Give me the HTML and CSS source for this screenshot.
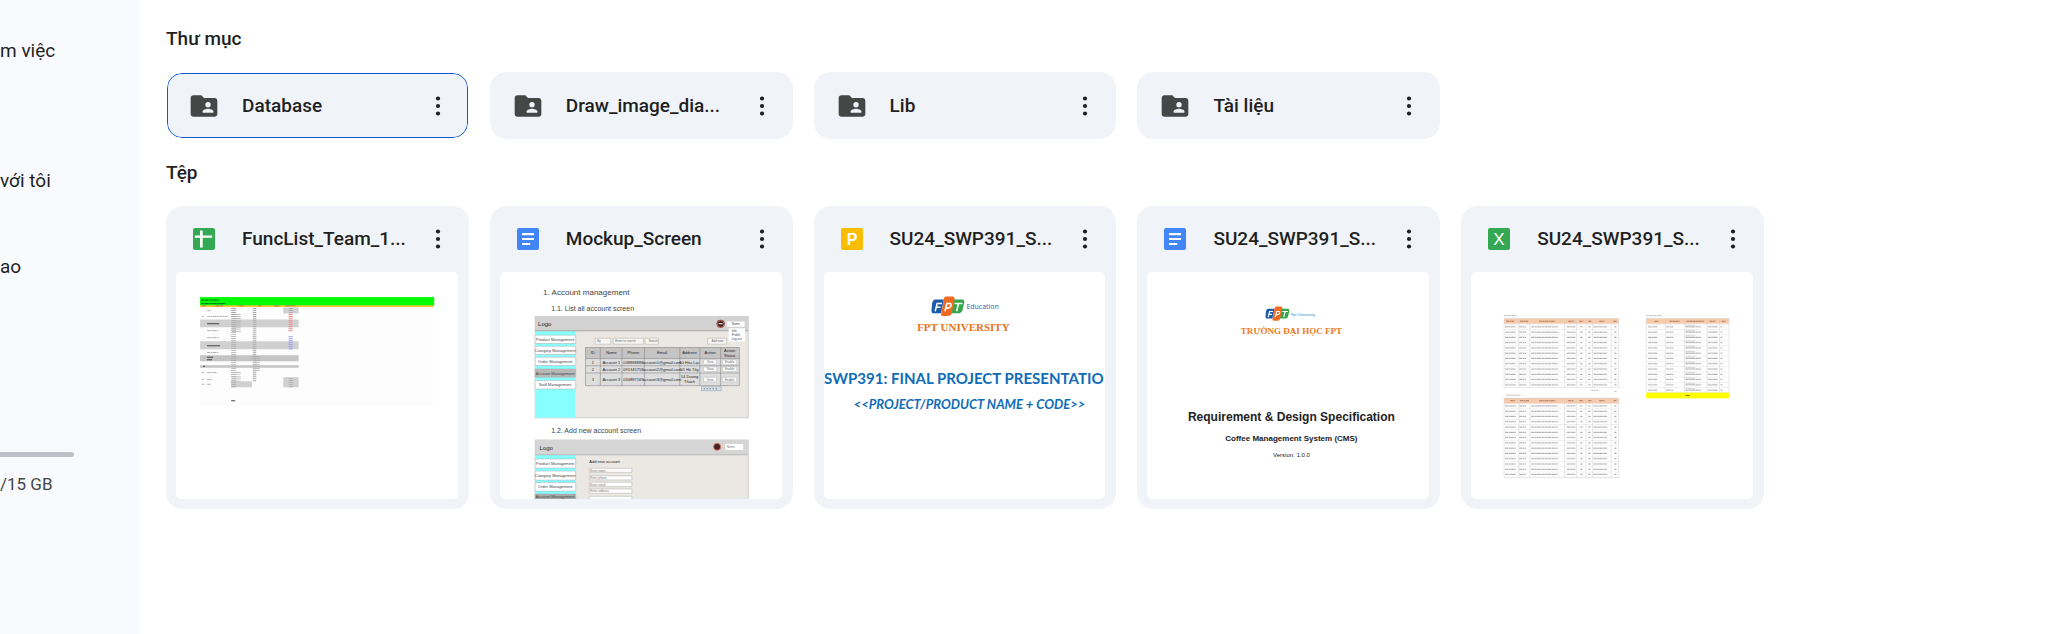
FILE: index.html
```html
<!DOCTYPE html>
<html lang="vi">
<head>
<meta charset="utf-8">
<title>Drive</title>
<link rel="stylesheet" href="styles.css">
</head>
<body>
<svg class="defs" aria-hidden="true">
  <defs>
    <symbol id="folder" viewBox="0 0 24 24">
      <path fill="#444746" d="M20 6h-8l-2-2H4c-1.100 0-2 .9-2 2v12c0 1.100.9 2 2 2h16c1.100 0 2-.9 2-2V8c0-1.100-.9-2-2-2z"/>
      <circle cx="15" cy="11" r="2" fill="#f0f4f9"/>
      <path fill="#f0f4f9" d="M11 17v-1c0-1.330 2.670-2 4-2s4 .67 4 2v1z"/>
    </symbol>
    <symbol id="more" viewBox="0 0 28 32">
      <g fill="#1f1f1f"><circle cx="14" cy="8.500" r="2.100"/><circle cx="14" cy="16" r="2.100"/><circle cx="14" cy="23.500" r="2.100"/></g>
    </symbol>
    <symbol id="sheets" viewBox="0 0 22 22">
      <rect width="22" height="22" rx="2" fill="#34a853"/>
      <path fill="#fff" d="M7 2.400h2.700v5h9.500v2.400H9.700v9.800H7V9.800H1.800V7.400H7z"/>
    </symbol>
    <symbol id="docs" viewBox="0 0 22 22">
      <rect width="22" height="22" rx="2" fill="#4285f4"/>
      <path fill="#fff" d="M5 5h12v2.200H5zM5 10h12v2H5zM5 15h8.300v2H5z"/>
    </symbol>
    <symbol id="fpt" viewBox="0 0 34 22">
      <path fill="#1c5cab" d="M4 4h9l-3 14H2q-2 0-2-3l1-8q1-3 3-3z"/>
      <path fill="#36a749" d="M23 4h9q2 0 2 3l-2 8q-1 3-3 3h-9z"/>
      <path fill="#ef6b22" d="M15 1h7q2 0 2 2l-3 15q-1 3-3 3h-6q-2 0-2-2l3-15q0-3 2-3z"/>
      <g fill="none" stroke="#fff" stroke-width="1.600"><path d="M4 16l2-8h5M5 12h4.500M14 16l2-8h3q2 0 1 3-1 2-5 2M24 8h8M28 8l-2 8"/></g>
    </symbol>
  </defs>
</svg>
<div class="app">
  <nav class="sidebar" aria-label="Drive">
    <a class="nav-item" href="#work">m việc</a>
    <a class="nav-item shared" href="#shared">với tôi</a>
    <a class="nav-item starred" href="#starred">ao</a>
    <div class="storage">
      <div class="meter"></div>
      <span>/15 GB</span>
    </div>
  </nav>
  <main class="content">
    <h2 class="section-title">Thư mục</h2>
    <ul class="grid">
      <li class="card selected"><div class="card-head"><svg class="icon"><use href="#folder"/></svg><a class="name" href="#database">Database</a><button class="more" aria-label="Thao tác khác"><svg><use href="#more"/></svg></button></div></li>
      <li class="card"><div class="card-head"><svg class="icon"><use href="#folder"/></svg><a class="name" href="#draw">Draw_image_dia...</a><button class="more" aria-label="Thao tác khác"><svg><use href="#more"/></svg></button></div></li>
      <li class="card"><div class="card-head"><svg class="icon"><use href="#folder"/></svg><a class="name" href="#lib">Lib</a><button class="more" aria-label="Thao tác khác"><svg><use href="#more"/></svg></button></div></li>
      <li class="card"><div class="card-head"><svg class="icon"><use href="#folder"/></svg><a class="name" href="#docs-folder">Tài liệu</a><button class="more" aria-label="Thao tác khác"><svg><use href="#more"/></svg></button></div></li>
    </ul>
    <h2 class="section-title">Tệp</h2>
    <ul class="grid">
      <li class="card">
        <div class="card-head file-head"><svg class="icon file"><use href="#sheets"/></svg><a class="name" href="#f1">FuncList_Team_1...</a><button class="more" aria-label="Thao tác khác"><svg><use href="#more"/></svg></button></div>
        <svg class="thumb" viewBox="0 0 281 226">
          <rect x="24" y="34" width="233" height="100" fill="#fdfdfd"/>
          <rect x="24" y="33" width="233" height="2" fill="#ffc23d"/>
          <rect x="24" y="25" width="233.500" height="8.300" fill="#0f0"/>
          <path stroke="#073" stroke-width="1.200" stroke-dasharray="3 .5 4 .7" d="M25 28h18M25 31.600h25"/>
          <path stroke="#a66" stroke-width=".8" d="M26 33.800h3M39 33.800h8M63 33.800h4M82 33.800h3M98 33.800h5M109 33.800h10"/>
          <g fill="#d0d0d0"><path d="M24 47.300h98.300V55H24zM24 69h98.300v8H24zM107 35.300h15.300v6H107zM107 105h15.300v10H107zM55 109h20.700v6H55z"/></g>
          <path fill="#c4c4c4" d="M24 83h98.300v6H24zM24 93h98.300v2.500H24z"/>
          <g stroke="#aaa" fill="none">
            <path stroke-width="5" stroke-dasharray=".8 1.200" d="M57.500 36V116"/>
            <path stroke-width="9" stroke-dasharray=".7 1.400" d="M60 42V60M60 100V109"/>
            <path stroke-width="3.500" stroke-dasharray="1 1" d="M78.300 36V109"/>
            <path stroke-width="4" stroke-dasharray=".8 1.200" d="M81.500 84V99M114.500 106V115M114.500 36V41"/>
            <path stroke-width=".9" stroke-dasharray="3 .5 2 .4" d="M31 38.500h4M26 44.300h2M31 44.300h21M31 58.500h11M31 65.500h12M31 80.300h11M26 100.300h2M31 100.300h10M26 107h2M31 107.300h5M31 112h4M26 112h2"/>
            <path stroke="#444" stroke-width="1" d="M31 51.500h12M31 73.500h13M31 85h6M31 87.500h5M55 128.300h4M27 94h2"/>
          </g>
          <path stroke="#e88" stroke-width="4" stroke-dasharray="1 1" d="M114.300 42V60"/>
          <path stroke="#99e" stroke-width="4" stroke-dasharray="1 1" d="M114.300 64V77"/>
        </svg>
      </li>
      <li class="card">
        <div class="card-head file-head"><svg class="icon file"><use href="#docs"/></svg><a class="name" href="#f2">Mockup_Screen</a><button class="more" aria-label="Thao tác khác"><svg><use href="#more"/></svg></button></div>
        <svg class="thumb arial" viewBox="0 0 281 226">
          <g fill="#444"><text x="43" y="23" font-size="8">1. Account management</text>
          <text x="51" y="39" font-size="7">1.1. List all account screen</text>
          <text x="51" y="161" font-size="7">1.2. Add new account screen</text></g>
          <rect x="35" y="44.500" width="212.500" height="101" fill="#ebe8e3" stroke="#bbb" stroke-width=".6"/>
          <rect x="35" y="59" width="40" height="86.300" fill="#8ff"/>
          <rect x="35" y="44.500" width="212.500" height="14" fill="#d2d2d2"/>
          <path d="M35 58.600h212.500" stroke="#999" stroke-width=".8"/>
          <text x="38" y="53.500" font-size="6" fill="#222">Logo</text>
          <circle cx="220" cy="51.700" r="4" fill="#422"/><circle cx="220" cy="51.700" r="3.500" fill="none" stroke="#e76" stroke-width=".8"/><path d="M218 51.700h4" stroke="#fff"/>
          <path fill="#fff" d="M226 49.300h18v5.200h-18zM228 56h16.300v13.300H228z"/>
          <g font-size="3" fill="#444"><text x="231" y="53">Name</text><text x="231" y="60">Info</text><text x="231" y="64">Profile</text><text x="231" y="68">Log out</text></g>
          <g fill="#fff" stroke="#aaa" stroke-width=".5"><path d="M35 63h40.500v8.300H35zM35 74h40.500v8.300H35zM35 85h40.500v8.300H35zM35 108.300h40.500v8.300H35z"/><path fill="#b8b8b8" d="M35 96.700h40.500v8.300H35z"/>
            <path fill="#f7f5f2" d="M95 66h15.500v6H95zM113 66h30v6h-30zM144.500 66H158v6h-13.500zM207 66h19v6h-19z"/></g>
          <g font-size="4" text-anchor="middle" fill="#444"><text x="55" y="68.500">Product Management</text><text x="55" y="79.500">Category Management</text><text x="55" y="90.500">Order Management</text><text x="55" y="102.300">Account Management</text><text x="55" y="113.800">Staff Management</text></g>
          <g font-size="3" fill="#666"><text x="97" y="70">By</text><text x="115" y="70">Enter to search</text><text x="148" y="70">Search</text><text x="211" y="70">Add new</text></g>
          <rect x="85.300" y="75.300" width="153.400" height="38" fill="#dedede"/>
          <rect x="85.300" y="75.300" width="153.400" height="11" fill="#c4c4c4"/>
          <path fill="none" stroke="#888" stroke-width=".6" d="M85.300 75.300h153.400v38H85.300zM85.300 86.300h153.400M85.300 93.500h153.400M85.300 100.700h153.400M100 75.300v38M121.700 75.300v38M144 75.300v38M179.300 75.300v38M199.300 75.300v38M220 75.300v38"/>
          <g fill="#fff" stroke="#aaa" stroke-width=".4"><path d="M203 87.500h13v4.500h-13zM222 87.500h14v4.500h-14zM203 94.700h13v4.500h-13zM222 94.700h14v4.500h-14zM203 105h13v4.500h-13zM222 105h14v4.500h-14z"/></g>
          <g font-size="4" text-anchor="middle" fill="#222"><text x="92.500" y="82">ID</text><text x="111" y="82">Name</text><text x="133" y="82">Phone</text><text x="161.500" y="82">Email</text><text x="189" y="82">Address</text><text x="209.500" y="82">Action</text><text x="229" y="80">Action</text><text x="229" y="84.500">Status</text></g>
          <g font-size="4" text-anchor="middle" fill="#222"><text x="92.500" y="91.300">1</text><text x="111" y="91.300">Account 1</text><text x="133" y="91.300">038888888</text><text x="161.500" y="91.300">account1@gmail.com</text><text x="189" y="91.300">10 Hòa Lạc</text>
          <text x="92.500" y="98.500">2</text><text x="111" y="98.500">Account 2</text><text x="133" y="98.500">091345758</text><text x="161.500" y="98.500">account2@gmail.com</text><text x="189" y="98.500">55 Hà Tây</text>
          <text x="92.500" y="108.300">3</text><text x="111" y="108.300">Account 3</text><text x="133" y="108.300">034887169</text><text x="161.500" y="108.300">account3@gmail.com</text><text x="189" y="106">14 Duong</text><text x="189" y="110.500">Thach</text></g>
          <g font-size="3" text-anchor="middle" fill="#666"><text x="209.500" y="91">View</text><text x="229" y="91">Enable</text><text x="209.500" y="98">View</text><text x="229" y="98">Enable</text><text x="209.500" y="108.300">View</text><text x="229" y="108.300">Enable</text></g>
          <rect x="201" y="114.500" width="19.500" height="4" fill="#d7e3ea" stroke="#89a" stroke-width=".5"/><path d="M203 116.500h15" stroke="#678" stroke-dasharray="1.500 1.500"/>
          <rect x="35" y="167.500" width="212.500" height="60" fill="#ebe8e3" stroke="#bbb" stroke-width=".6"/>
          <rect x="35" y="182.500" width="40" height="44" fill="#8ff"/>
          <rect x="35" y="167.500" width="212.500" height="14.800" fill="#d5d5d5"/><path d="M35 182.300h212.500" stroke="#aaa" stroke-width=".7"/>
          <text x="39.500" y="177" font-size="6" fill="#222">Logo</text>
          <circle cx="216.500" cy="174.300" r="3.500" fill="#422" stroke="#e76" stroke-width=".8"/>
          <path fill="#fff" d="M224.500 171.500h18v6h-18z"/><text x="226" y="175.500" font-size="3" fill="#777">Name</text>
          <g fill="#fff" stroke="#aaa" stroke-width=".5"><path d="M35 186.500h40.500v9H35zM35 198.500h40.500v9H35zM35 210h40.500v8.500H35z"/><path fill="#aaa" d="M35 221.300h40.500v8H35z"/><path d="M89 195.700h42.500v4H89zM89 203.300h42.500v4H89zM89 209.700h42.500v4.300H89zM89 216.300h42.500v4.300H89zM89 223.700h42.500v4H89z"/></g>
          <g font-size="4" text-anchor="middle" fill="#444"><text x="55" y="192.500">Product Management</text><text x="55" y="204.300">Category Management</text><text x="55" y="215.500">Order Management</text><text x="55" y="225">Account Management</text></g>
          <text x="89" y="190.300" font-size="4" fill="#222">Add new account</text>
          <g font-size="3" fill="#777"><text x="90" y="199">Enter name</text><text x="90" y="206.500">Enter phone</text><text x="90" y="213">Enter email</text><text x="90" y="219.700">Enter address</text></g>
        </svg>
      </li>
      <li class="card">
        <div class="card-head file-head"><svg class="icon file" viewBox="0 0 22 22"><rect width="22" height="22" rx="2" fill="#fbbc04"/><text class="letter" x="11" y="17">P</text></svg><a class="name" href="#f3">SU24_SWP391_S...</a><button class="more" aria-label="Thao tác khác"><svg><use href="#more"/></svg></button></div>
        <svg class="thumb" viewBox="0 0 281 226">
          <use href="#fpt" x="107" y="23.500" width="33" height="21.500"/>
          <text class="humanist" x="142" y="37" font-size="7" fill="#2a6ab0">Education</text>
          <text class="slab" x="139" y="58.500" font-size="11" fill="#e8731d">FPT UNIVERSITY</text>
          <text class="deck" x="0" y="112" font-size="15">SWP391: FINAL PROJECT PRESENTATIO</text>
          <text class="deck italic" x="145" y="137" font-size="13" text-anchor="middle">&lt;&lt;PROJECT/PRODUCT NAME + CODE&gt;&gt;</text>
        </svg>
      </li>
      <li class="card">
        <div class="card-head file-head"><svg class="icon file"><use href="#docs"/></svg><a class="name" href="#f4">SU24_SWP391_S...</a><button class="more" aria-label="Thao tác khác"><svg><use href="#more"/></svg></button></div>
        <svg class="thumb arial" viewBox="0 0 281 226">
          <use href="#fpt" x="118" y="33" width="24" height="17"/>
          <text x="143.500" y="43.500" font-size="4" fill="#3a8fc8">Fpt University</text>
          <text class="slab" x="144" y="61.500" font-size="9" fill="#f07a1c">TRƯỜNG ĐẠI HỌC FPT</text>
          <g text-anchor="middle" font-weight="bold" fill="#222"><text x="144" y="149" font-size="12">Requirement &amp; Design Specification</text>
          <text x="144" y="169" font-size="8">Coffee Management System (CMS)</text></g>
          <text x="144" y="184" font-size="6" text-anchor="middle" fill="#222">Version: 1.0.0</text>
        </svg>
      </li>
      <li class="card">
        <div class="card-head file-head"><svg class="icon file" viewBox="0 0 22 22"><rect width="22" height="22" rx="2" fill="#34a853"/><text class="letter thin" x="11" y="17">X</text></svg><a class="name" href="#f5">SU24_SWP391_S...</a><button class="more" aria-label="Thao tác khác"><svg><use href="#more"/></svg></button></div>
        <svg class="thumb" viewBox="0 0 281 226">
          <defs>
            <pattern id="rows" x="33" y="51.700" width="115" height="5.260" patternUnits="userSpaceOnUse">
              <path stroke="#ddd" stroke-width=".5" d="M0 .3h115"/>
              <path stroke="#aaa" stroke-width="1" stroke-dasharray="3 .4 2 .3 4 .5" d="M1 3h11M15 3h7M27 3h27M62.500 3h8.500M89 3h14"/>
              <path stroke="#999" stroke-width="1" d="M76 3h2M84 3h2M110 3h2"/>
            </pattern>
            <pattern id="rows-b" x="174.700" y="51.700" width="83" height="5.260" patternUnits="userSpaceOnUse">
              <path stroke="#ddd" stroke-width=".5" d="M0 .3h83"/>
              <path stroke="#aaa" stroke-width="1" stroke-dasharray="3 .4 2 .3 4 .5" d="M2 3h9M20 3h7M39 3h16M61.500 3h10M74 3h2"/>
              <path stroke="#bbb" stroke-width=".8" stroke-dasharray="2 .4" d="M39 1.500h10"/>
            </pattern>
          </defs>
          <path stroke="#aaa" stroke-width=".8" stroke-dasharray="2 .5" d="M33 43.500h13M175 43.500h15M35 122.800h15M120 118h7M143 119h2"/>
          <path fill="#f7caac" d="M33 46.300h114.300v5.400H33zM33 125.700h114.300v5.400H33zM174.700 46.300h82.600v5.400h-82.600z"/>
          <path stroke="#a87a60" stroke-width="1" stroke-dasharray="3 .4 2 .4" d="M35 49h8M49 49h8M68 49h16M97 49h6M108 49h4M117 49h3M128 49h5M142 49h3M39 128.400h5M49 128.400h9M68 128.400h16M97 128.400h5M108 128.400h4M117 128.400h3M128 128.400h5M142 128.400h3M183 49h4M198 49h10M215 49h17M238 49h6M250 49h4"/>
          <path fill="url(#rows)" d="M33 51.700h114.300V115H33zM33 131h114.300v74H33z"/>
          <path fill="url(#rows-b)" d="M174.700 51.700h82.600V120h-82.600z"/>
          <path fill="none" stroke="#d0d0d0" stroke-width=".5" d="M33 46.300h114.300V115H33zM33 125.700h114.300V205H33zM174.700 46.300h82.600V120h-82.600zM47.700 46.300V115M58.700 46.300V115M93.300 46.300V115M105.300 46.300V115M114.700 46.300V115M121.300 46.300V115M139.700 46.300V115M47.700 126v79M58.700 126v79M93.300 126v79M105.300 126v79M114.700 126v79M121.300 126v79M139.700 126v79M193.700 46.300V120M212.700 46.300V120M235.300 46.300V120M247.700 46.300V120"/>
          <rect x="174.700" y="120.300" width="82.600" height="5.700" fill="#ff0"/><path d="M214 123.200h4" stroke="#770"/>
        </svg>
      </li>
    </ul>
  </main>
</div>
</body>
</html>
```
FILE: styles.css
```css
* { box-sizing: border-box; }
body { margin: 0; background: #fff; color: #1f1f1f; font-family: Roboto, "Noto Sans", sans-serif; font-size: 19px; line-height: 24px; }
.defs { display: none; }
.app { display: flex; min-height: 100vh; }
.sidebar { flex: 0 0 139px; display: flex; flex-direction: column; align-items: flex-start; padding-top: 39px; background: #f8fafd; overflow: hidden; white-space: nowrap; }
.nav-item { color: inherit; text-decoration: none; }
.shared { margin-top: 106px; }
.starred { margin-top: 62px; }
.storage { width: 100%; margin-top: 173px; padding-right: 65px; color: #444746; font-size: 17px; }
.meter { height: 5px; margin-bottom: 15px; border-radius: 0 3px 3px 0; background: #bcc0c7; box-shadow: 0 0 0 1px #fff; }
.content { flex: 1; min-width: 0; padding: 27px 283px 0 27px; }
.section-title { margin: 0; font-size: 19px; font-weight: 500; line-height: 24px; }
.grid { display: grid; grid-template-columns: repeat(5, minmax(0, 1fr)); gap: 21px; margin: 21px 0 22px; padding: 0; list-style: none; }
.card { padding: 0 10px 9px 9px; border: 1px solid #f0f4f9; border-radius: 16px; background: #f0f4f9; }
.card:not(:has(.thumb)) { padding-bottom: 0; }
.selected { border-color: #fff; box-shadow: inset 0 0 0 1px #0b57d0; }
.card-head { display: flex; align-items: center; height: 65px; padding: 0 6px 0 12px; }
.file-head { height: 64px; margin-bottom: 1px; }
.icon { flex: none; width: 32px; height: 32px; margin-right: 22px; }
.file { padding: 5px; }
.name { flex: 1; min-width: 0; overflow: hidden; color: inherit; font-weight: 500; text-decoration: none; white-space: nowrap; }
.more { flex: none; width: 28px; height: 32px; padding: 0; border: 0; background: none; cursor: pointer; }
.more svg { display: block; width: 100%; height: 100%; }
.thumb { display: block; width: 100%; border-radius: 5px; background: #fff; }
.arial { font-family: "Liberation Sans", Arial, sans-serif; }
.letter { fill: #fff; font: bold 16px "Liberation Sans", Arial, sans-serif; text-anchor: middle; }
.thin { font-weight: normal; font-size: 17px; }
.humanist { font-family: "Open Sans", sans-serif; }
.slab { font-family: "Liberation Serif", serif; font-weight: bold; text-anchor: middle; }
.deck { fill: #0f6cb8; font-family: Lato, sans-serif; font-weight: bold; }
.italic { font-style: italic; }
```
